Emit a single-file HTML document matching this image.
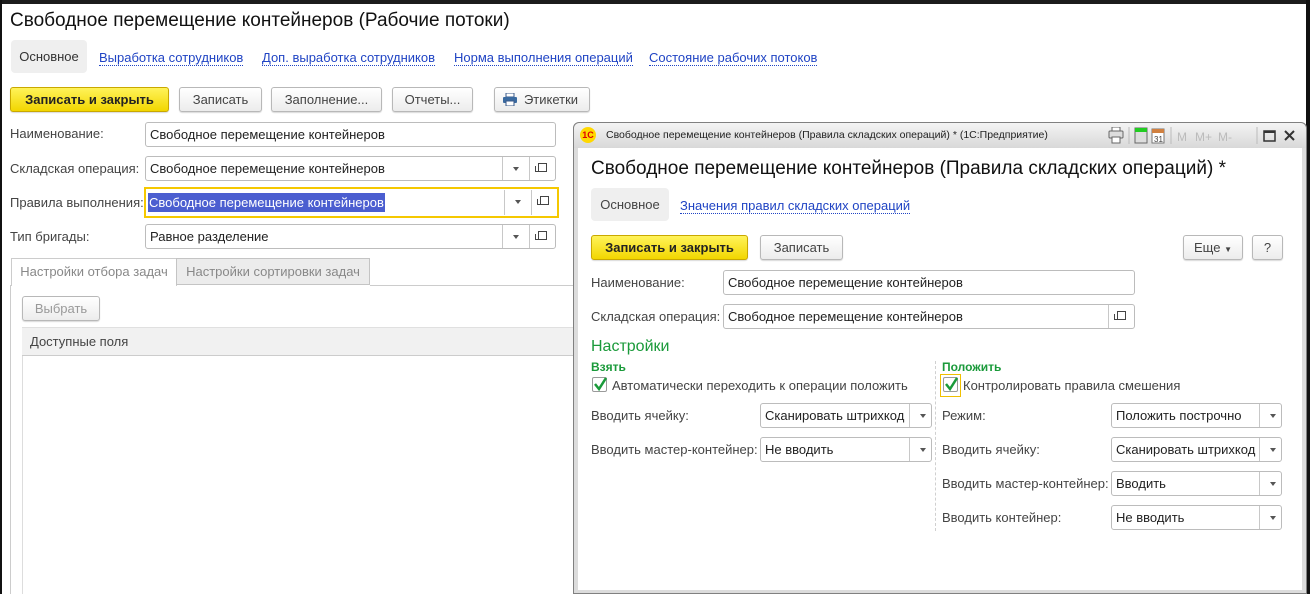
<!DOCTYPE html>
<html><head><meta charset="utf-8">
<style>
*{box-sizing:border-box;margin:0;padding:0}
body{width:1310px;height:594px;overflow:hidden;background:#fff;font-family:"Liberation Sans",Arial,sans-serif;font-size:13px;color:#444;position:relative}
.a{position:absolute;white-space:nowrap}
.btn{position:absolute;height:25px;border:1px solid #b8b8b8;border-radius:3px;background:linear-gradient(#fff,#ececec);box-shadow:0 1px 1px rgba(0,0,0,.15);text-align:center;line-height:23px;color:#444}
.yb{background:linear-gradient(#fff35a,#f2d600);border-color:#c9a800;font-weight:bold;color:#222}
.inp{position:absolute;height:25px;border:1px solid #bcbcbc;border-radius:3px;background:#fff;line-height:23px;padding-left:4px;color:#222}
.dd{position:absolute;top:0;bottom:0;width:27px;border-left:1px solid #c8c8c8}
.dd:after{content:"";position:absolute;left:10px;top:10px;border:3px solid transparent;border-top:4px solid #555}
.op{position:absolute;top:0;bottom:0;width:26px;border-left:1px solid #c8c8c8}
.op:before{content:"";position:absolute;left:8px;top:6px;width:7px;height:7px;border:1px solid #444}
.op:after{content:"";position:absolute;left:5px;top:9px;width:4px;height:5px;border-left:1px solid #444;border-bottom:1px solid #444;}
.lnk{position:absolute;color:#2044c4;border-bottom:1px dotted #2044c4;line-height:14px}
.g{color:#1a9a3a}
.cb{position:absolute;width:15px;height:15px;border:1px solid #9a9a9a;border-radius:2px;background:#fff}
.cb svg{position:absolute;left:0;top:-2px}
</style></head><body>
<div class="a" style="left:0;top:0;width:1310px;height:4px;background:#1c1c1c"></div>
<div class="a" style="left:0;top:0;width:2px;height:594px;background:#111"></div>
<div class="a" style="left:1306px;top:0;width:4px;height:594px;background:#111"></div>

<div class="a" style="left:10px;top:10px;font-size:19px;color:#111">Свободное перемещение контейнеров (Рабочие потоки)</div>
<div class="a" style="left:11px;top:40px;width:76px;height:33px;background:#efefef;border-radius:4px;line-height:33px;text-align:center;color:#333">Основное</div>
<div class="lnk" style="left:99px;top:51px">Выработка сотрудников</div>
<div class="lnk" style="left:262px;top:51px">Доп. выработка сотрудников</div>
<div class="lnk" style="left:454px;top:51px">Норма выполнения операций</div>
<div class="lnk" style="left:649px;top:51px">Состояние рабочих потоков</div>

<div class="btn yb" style="left:10px;top:87px;width:159px">Записать и закрыть</div>
<div class="btn" style="left:179px;top:87px;width:83px">Записать</div>
<div class="btn" style="left:271px;top:87px;width:111px">Заполнение...</div>
<div class="btn" style="left:392px;top:87px;width:81px">Отчеты...</div>
<div class="btn" style="left:494px;top:87px;width:96px;padding-left:18px"><svg style="position:absolute;left:8px;top:5px" width="14" height="13"><rect x="3" y="0" width="8" height="4" fill="#fff" stroke="#3a5a8a"/><rect x="0" y="4" width="14" height="6" rx="1" fill="#3a6aa0"/><rect x="3" y="8" width="8" height="5" fill="#fff" stroke="#3a5a8a"/></svg>Этикетки</div>

<div class="a" style="left:10px;top:126px">Наименование:</div>
<div class="inp" style="left:145px;top:122px;width:411px">Свободное перемещение контейнеров</div>
<div class="a" style="left:10px;top:161px">Складская операция:</div>
<div class="inp" style="left:145px;top:156px;width:411px">Свободное перемещение контейнеров<div class="dd" style="right:26px"></div><div class="op" style="right:0"></div></div>
<div class="a" style="left:144px;top:187px;width:415px;height:31px;border:2px solid #f5c800"></div>
<div class="a" style="left:10px;top:195px">Правила выполнения:</div>
<div class="a" style="left:148px;top:190px;width:409px;height:25px;line-height:25px;color:#222"><span style="background:#4b5ed0;color:#fff;padding:2px 1px">Свободное перемещение контейнеров</span><div class="dd" style="right:26px;border-left-color:#c8c8c8"></div><div class="op" style="right:0"></div></div>
<div class="a" style="left:10px;top:229px">Тип бригады:</div>
<div class="inp" style="left:145px;top:224px;width:411px">Равное разделение<div class="dd" style="right:26px"></div><div class="op" style="right:0"></div></div>

<div class="a" style="left:11px;top:258px;width:166px;height:28px;border:1px solid #ccc;border-bottom:none;background:#fff;line-height:26px;text-align:center;color:#888">Настройки отбора задач</div>
<div class="a" style="left:176px;top:258px;width:194px;height:27px;border:1px solid #c4c4c4;background:#ececec;line-height:26px;text-align:center;color:#888">Настройки сортировки задач</div>
<div class="a" style="left:370px;top:285px;width:205px;height:1px;background:#ccc"></div>
<div class="a" style="left:10px;top:285px;width:1px;height:309px;background:#ccc"></div>
<div class="btn" style="left:22px;top:296px;width:78px;color:#999">Выбрать</div>
<div class="a" style="left:22px;top:327px;width:552px;height:29px;background:#f1f1f1;border-top:1px solid #e0e0e0;border-bottom:1px solid #ccc;line-height:27px;padding-left:8px;color:#444">Доступные поля</div>
<div class="a" style="left:22px;top:356px;width:1px;height:238px;background:#ddd"></div>

<!-- dialog -->
<div class="a" style="left:573px;top:122px;width:734px;height:472px;background:#dcdcdc;border:1px solid #808080;border-radius:6px 6px 0 0"></div>
<div class="a" style="left:574px;top:123px;width:732px;height:25px;background:linear-gradient(#f4f4f4,#d8d8d8);border-radius:6px 6px 0 0"></div>
<div class="a" style="left:580px;top:127px;width:16px;height:16px;border-radius:50%;background:#ffd800;color:#d00;font-size:9px;font-weight:bold;line-height:16px;text-align:center">1С</div>
<div class="a" style="left:606px;top:129px;font-size:10.5px;color:#222">Свободное перемещение контейнеров (Правила складских операций) *  (1С:Предприятие)</div>
<svg class="a" style="left:1108px;top:127px" width="195" height="18">
<rect x="1" y="4" width="14" height="7" rx="1" fill="#ddd" stroke="#666"/><rect x="4" y="0" width="8" height="4" fill="#fff" stroke="#666"/><rect x="4" y="10" width="8" height="6" fill="#fff" stroke="#666"/>
<line x1="21" y1="0" x2="21" y2="17" stroke="#bbb"/>
<rect x="27" y="1" width="12" height="15" fill="#ddd" stroke="#666"/><rect x="27" y="1" width="12" height="4" fill="#2c2"/>
<rect x="44" y="2" width="12" height="14" fill="#fff" stroke="#777"/><rect x="44" y="2" width="12" height="4" fill="#d08040"/><text x="46" y="15" font-size="8" fill="#444" font-family="Liberation Sans">31</text>
<line x1="63" y1="0" x2="63" y2="17" stroke="#bbb"/>
<text x="69" y="14" font-size="12" fill="#bbb" font-family="Liberation Sans">M</text><text x="87" y="14" font-size="12" fill="#bbb" font-family="Liberation Sans">M+</text><text x="110" y="14" font-size="12" fill="#bbb" font-family="Liberation Sans">M-</text>
<line x1="149" y1="0" x2="149" y2="17" stroke="#bbb"/>
<rect x="156" y="4" width="11" height="10" fill="none" stroke="#333" stroke-width="1.5"/><line x1="156" y1="5" x2="167" y2="5" stroke="#333" stroke-width="2"/>
<path d="M177 4 L186 13 M186 4 L177 13" stroke="#333" stroke-width="2"/>
</svg>
<div class="a" style="left:578px;top:148px;width:724px;height:442px;background:#fff"></div>

<div class="a" style="left:591px;top:158px;font-size:19px;color:#111">Свободное перемещение контейнеров (Правила складских операций) *</div>
<div class="a" style="left:591px;top:188px;width:78px;height:33px;background:#efefef;border-radius:4px;line-height:33px;text-align:center">Основное</div>
<div class="lnk" style="left:680px;top:199px">Значения правил складских операций</div>
<div class="btn yb" style="left:591px;top:235px;width:157px">Записать и закрыть</div>
<div class="btn" style="left:760px;top:235px;width:83px">Записать</div>
<div class="btn" style="left:1183px;top:235px;width:60px">Еще <span style="font-size:8px">▼</span></div>
<div class="btn" style="left:1252px;top:235px;width:31px">?</div>

<div class="a" style="left:591px;top:275px">Наименование:</div>
<div class="inp" style="left:723px;top:270px;width:412px">Свободное перемещение контейнеров</div>
<div class="a" style="left:591px;top:309px">Складская операция:</div>
<div class="inp" style="left:723px;top:304px;width:412px">Свободное перемещение контейнеров<div class="op" style="right:0"></div></div>

<div class="a g" style="left:591px;top:338px;font-size:16px">Настройки</div>
<div class="a g" style="left:591px;top:360px;font-weight:bold;font-size:12px">Взять</div>
<div class="cb" style="left:592px;top:377px"><svg width="15" height="16"><path d="M2 8 L6 13 L13 2" stroke="#1a9a3a" stroke-width="2.5" fill="none"/></svg></div>
<div class="a" style="left:612px;top:378px">Автоматически переходить к операции положить</div>
<div class="a" style="left:591px;top:408px">Вводить ячейку:</div>
<div class="inp" style="left:760px;top:403px;width:172px">Сканировать штрихкод<div class="dd" style="right:0;width:22px"></div></div>
<div class="a" style="left:591px;top:442px">Вводить мастер-контейнер:</div>
<div class="inp" style="left:760px;top:437px;width:172px">Не вводить<div class="dd" style="right:0;width:22px"></div></div>

<div class="a" style="left:935px;top:361px;height:170px;border-left:1px dashed #d0d0d0"></div>
<div class="a g" style="left:942px;top:360px;font-weight:bold;font-size:12px">Положить</div>
<div class="a" style="left:940px;top:374px;width:21px;height:23px;border:1px solid #f0c000"></div>
<div class="cb" style="left:943px;top:377px"><svg width="15" height="16"><path d="M2 8 L6 13 L13 2" stroke="#1a9a3a" stroke-width="2.5" fill="none"/></svg></div>
<div class="a" style="left:963px;top:378px">Контролировать правила смешения</div>
<div class="a" style="left:942px;top:408px">Режим:</div>
<div class="inp" style="left:1111px;top:403px;width:171px">Положить построчно<div class="dd" style="right:0;width:22px"></div></div>
<div class="a" style="left:942px;top:442px">Вводить ячейку:</div>
<div class="inp" style="left:1111px;top:437px;width:171px">Сканировать штрихкод<div class="dd" style="right:0;width:22px"></div></div>
<div class="a" style="left:942px;top:476px">Вводить мастер-контейнер:</div>
<div class="inp" style="left:1111px;top:471px;width:171px">Вводить<div class="dd" style="right:0;width:22px"></div></div>
<div class="a" style="left:942px;top:510px">Вводить контейнер:</div>
<div class="inp" style="left:1111px;top:505px;width:171px">Не вводить<div class="dd" style="right:0;width:22px"></div></div>
</body></html>
